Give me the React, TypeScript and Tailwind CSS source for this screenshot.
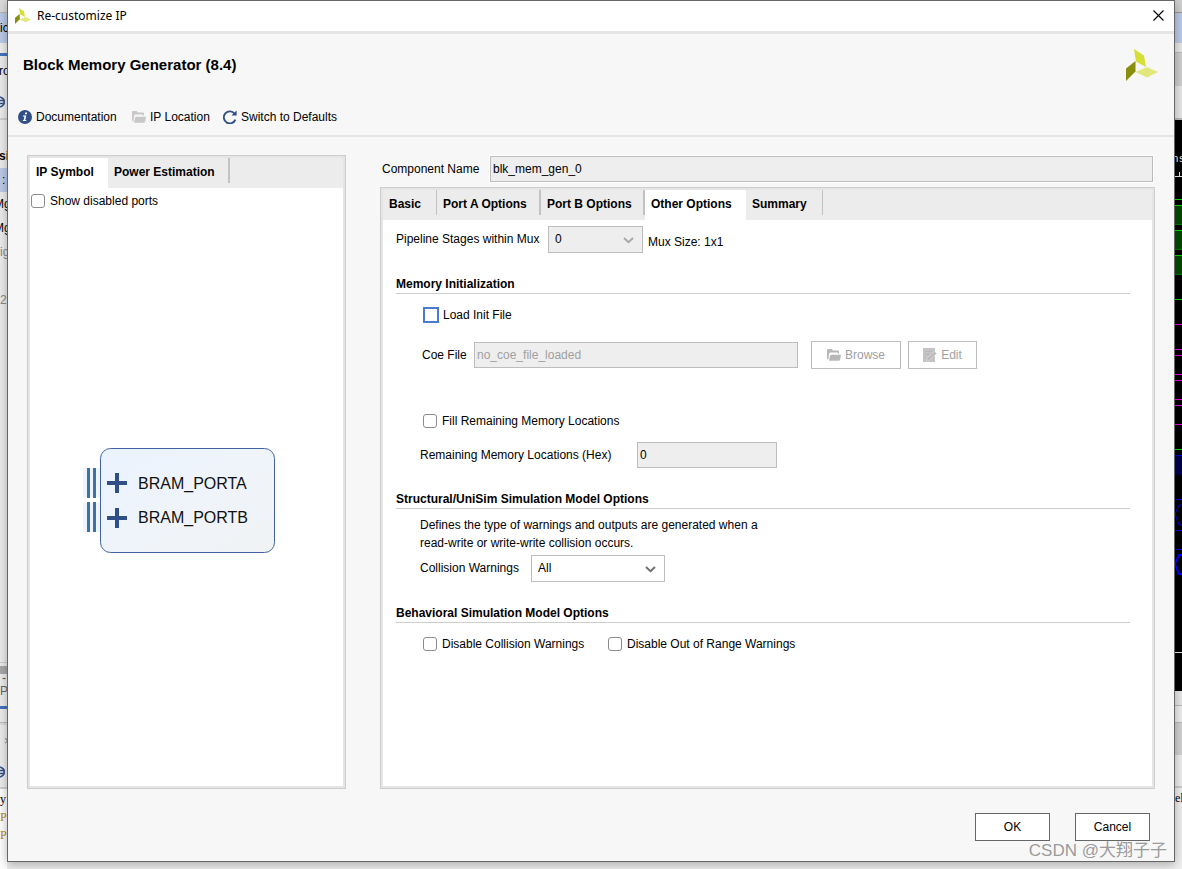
import { useState } from 'react'
import type { ReactNode } from 'react'
import clsx from 'clsx'

const SYMBOL_TABS = [
  { label: 'IP Symbol', width: 'w-[78px]', divider: '' },
  { label: 'Power Estimation', width: 'w-[122px]', divider: 'w-[2px]' },
]

const OPTION_TABS = [
  { label: 'Basic', width: 'w-[54px]', divider: 'w-px' },
  { label: 'Port A Options', width: 'w-[104px]', divider: 'w-[2px]' },
  { label: 'Port B Options', width: 'w-[104px]', divider: 'w-[2px]' },
  { label: 'Other Options', width: 'w-[101px]', divider: '' },
  { label: 'Summary', width: 'w-[77px]', divider: 'w-px' },
]

// Slices of the main window that stay visible on the left of the dialog
const LEFT_ROWS = [
  { text: '', className: 'h-[13px] border-b border-[#b5b5b5] bg-[#dcdcdc]' },
  { text: 'ic', className: 'h-[30px] bg-[#bccbe9]' },
  { text: '', className: 'h-[10px] bg-[#efefef]' },
  { text: '', className: 'h-[3px] bg-[#4573c0]' },
  { text: 'ro', className: 'h-[30px] -ml-px' },
  { text: 'globe', className: 'h-8' },
  { text: '', className: 'h-[2px] bg-[#cfcfcf]' },
  { text: '', className: 'h-6' },
  { text: 'si', className: 'h-6 -ml-px font-bold' },
  { text: ':', className: 'h-6 bg-[#bccbe9] pl-[2px]' },
  { text: 'Mg', className: 'h-6 -ml-1.5' },
  { text: 'Mg', className: 'h-6 -ml-1.5' },
  { text: 'ig', className: 'h-6 text-[#888]' },
  { text: '', className: 'h-6' },
  { text: '2', className: 'h-6 text-[#888]' },
  { text: '', className: 'h-[351px] border-b border-[#cfcfcf]' },
  { text: '', className: 'h-[3px]' },
  { text: '', className: 'h-2 bg-[#a9a9a9]' },
  { text: '-', className: 'h-2 pl-[2px] text-[#555]' },
  { text: 'P', className: 'h-[18px] text-[#666]' },
  { text: '', className: 'h-[6px]' },
  { text: '', className: 'h-[3px] bg-[#4573c0]' },
  { text: '', className: 'h-[13px]' },
  { text: '', className: 'h-[3px] border-t border-[#bbb] bg-[#dedede]' },
  { text: '×', className: 'h-8 pl-1 text-[#888]' },
  { text: 'globe', className: 'h-[30px]' },
  { text: '', className: 'h-[2px] bg-[#d0d0d0]' },
  { text: 'y', className: "h-[19px] bg-white font-['Liberation_Serif',serif]" },
  { text: 'P', className: "h-[18px] bg-white font-['Liberation_Serif',serif] text-[#b8860b]" },
  { text: 'P', className: "h-[18px] bg-white font-['Liberation_Serif',serif] text-[#b8860b]" },
  { text: '', className: 'grow bg-white' },
]

const WAVE_LINES = [
  { y: 79, color: '#00d000' },
  { y: 179, color: '#00d000' },
  { y: 204, color: '#e000e0' },
  { y: 229, color: '#e000e0' },
  { y: 235, color: '#e000e0' },
  { y: 254, color: '#e000e0' },
  { y: 260, color: '#e000e0' },
  { y: 279, color: '#e000e0' },
  { y: 285, color: '#e000e0' },
  { y: 304, color: '#e000e0' },
  { y: 329, color: '#00d000' },
  { y: 379, color: '#0000d8' },
  { y: 410, color: '#0000d8' },
  { y: 429, color: '#0000d8' },
  { y: 532, color: '#d8d8d8' },
]

function XilinxLogo({ className }: { className: string }) {
  return (
    <svg className={className} viewBox="0 0 32 32" aria-hidden="true">
      <path d="M8 0 L18 6.5 L20 18 L10 12.5 Z" fill="#d6df35" />
      <path d="M0 19.5 L9.5 12 V22.5 L0 32 Z" fill="#8b8d0c" />
      <path d="M9.5 23 L21 18 L32 23 L21 28.5 Z" fill="#e3e87c" />
    </svg>
  )
}

function InfoIcon() {
  return (
    <svg className="size-3.5" viewBox="0 0 14 14" aria-hidden="true">
      <circle cx="7" cy="7" r="7" fill="#314f87" />
      <path d="M7.2 2.4h2l-.4 1.8h-2zM5 5.4h3.3L7.3 10h1l-.2 1H4.7l.2-1h.8l.7-3.6H4.8z" fill="#fff" />
    </svg>
  )
}

function FolderIcon({ color }: { color: string }) {
  return (
    <svg className="size-3.5" viewBox="0 0 14 14" fill={color} aria-hidden="true">
      <path d="M0 2 Q0 1 1 1 H4.6 L6 2.4 H11 Q12 2.4 12 3.4 V5.6 H10.8 V4.4 H3.6 Q2.4 4.4 2.2 5.6 L1.4 11.6 Q0 11.4 0 10.4 Z" />
      <path d="M4.4 6.8 H14 L13.2 11.4 Q13 12.8 11.6 12.8 H2 L3 8 Q3.2 6.8 4.4 6.8 Z" />
    </svg>
  )
}

function RefreshIcon() {
  return (
    <svg className="size-3.5" viewBox="0 0 14 14" aria-hidden="true">
      <path d="M11.6 3.8 A6 6 0 1 0 12.4 9.6" fill="none" stroke="#314f87" strokeWidth="1.9" />
      <path d="M13.6 0.4 V5.6 H8.4 Z" fill="#314f87" />
    </svg>
  )
}

function EditIcon() {
  return (
    <svg className="size-3.5" viewBox="0 0 14 14" aria-hidden="true">
      <path d="M0 0h12v14H0z" fill="#c4c4c4" />
      <path d="M2 3.5h7M2 6.5h5M2 9.5h2" stroke="#b8b8b8" />
      <path d="M3.4 13.2 4 10 11.4 3.4 13.6 5.4 6.4 12.4Z" fill="#bdbdbd" stroke="#dcdcdc" strokeWidth=".7" />
    </svg>
  )
}

function Globe() {
  return (
    <svg className="h-3.5 w-[5px]" viewBox="0 0 5 14" aria-hidden="true">
      <path d="M0 2 Q5 4 4 7 Q5 10 0 12 M0 5.5H4 M0 8.5H4" fill="none" stroke="#314f87" strokeWidth="1.6" />
    </svg>
  )
}

function Panel({ className, children }: { className: string; children: ReactNode }) {
  return (
    <section className={clsx('border border-[#cdcdcd]', className)}>
      <div className="flex h-full flex-col border-2 border-[#e5e5e5] bg-white">{children}</div>
    </section>
  )
}

type Tab = { label: string; width: string; divider: string }

function TabBar({ tabs, initial }: { tabs: Tab[]; initial: string }) {
  const [active, setActive] = useState(initial)
  return (
    <div role="tablist" className="flex h-[30px] shrink-0 bg-[#ececec]">
      {tabs.map((tab) => (
        <button
          key={tab.label}
          role="tab"
          aria-selected={active === tab.label}
          onClick={() => setActive(tab.label)}
          className={clsx(
            'flex items-start justify-between pl-1.5 font-bold whitespace-nowrap',
            tab.width,
            active === tab.label && 'bg-white'
          )}
        >
          <span className="leading-[28px]">{tab.label}</span>
          <span className={clsx('h-[25px] bg-[#c2c2c2]', tab.divider)} />
        </button>
      ))}
    </div>
  )
}

function Check({ label, focused = false }: { label: string; focused?: boolean }) {
  return (
    <label className={clsx('flex items-center', focused ? 'gap-1' : 'gap-[5px]')}>
      <input
        type="checkbox"
        className={clsx(
          'appearance-none bg-white checked:bg-[#4573c0]',
          focused ? 'size-4 border-2 border-[#4b7bd0]' : 'size-3.5 rounded-[3px] border border-[#8c8c8c]'
        )}
      />
      {label}
    </label>
  )
}

function Select({ id, value, className, disabled = false }: { id: string; value: string; className: string; disabled?: boolean }) {
  return (
    <div className={clsx('relative h-[27px]', className)}>
      <select
        id={id}
        disabled={disabled}
        defaultValue={value}
        className={clsx(
          'size-full appearance-none border border-[#bdbdbd] px-1.5 pb-[2px] text-black opacity-100',
          disabled ? 'bg-[#eee]' : 'bg-white'
        )}
      >
        <option>{value}</option>
      </select>
      <svg className="pointer-events-none absolute top-[11px] right-[9px] h-[7px] w-[11px]" viewBox="0 0 11 7" aria-hidden="true">
        <path d="M1 1 L5.5 5.2 L10 1" fill="none" stroke={disabled ? '#a8a8a8' : '#707070'} strokeWidth="2" />
      </svg>
    </div>
  )
}

function Heading({ children }: { children: ReactNode }) {
  return <h2 className="mr-[22px] ml-[13px] h-[18px] border-b border-[#cdcdcd] leading-4 font-bold">{children}</h2>
}

function IpSymbol() {
  return (
    <svg className="h-[105px] w-[208px]" viewBox="0 0 208 105" role="img" aria-label="Block memory symbol">
      <defs>
        <linearGradient id="block" x1="0" x2="1" y1="0" y2="1">
          <stop offset="0" stopColor="#eaf3ff" />
          <stop offset=".6" stopColor="#f0f4f9" />
          <stop offset="1" stopColor="#f0f2f4" />
        </linearGradient>
      </defs>
      <path d="M0 20h17v29H0zM0 55h17v29H0z" fill="#edf4fc" />
      <path d="M4 20h3v30H4zM10 20h3v30h-3zM4 54h3v30H4zM10 54h3v30h-3z" fill="#4270a5" />
      <rect x="17.5" y=".5" width="174" height="104" rx="10" fill="url(#block)" stroke="#4163a3" />
      <path d="M32 25h4v8h8v4h-8v8h-4v-8h-8v-4h8zM32 60h4v8h8v4h-8v8h-4v-8h-8v-4h8z" fill="#314f87" />
      <text x="55" y="41" fontSize="16" fill="#111">BRAM_PORTA</text>
      <text x="55" y="75" fontSize="16" fill="#111">BRAM_PORTB</text>
    </svg>
  )
}

function LeftStrip() {
  return (
    <aside className="flex w-[7px] shrink-0 flex-col overflow-hidden">
      {LEFT_ROWS.map((row, i) => (
        <div key={i} className={clsx('flex shrink-0 items-center whitespace-nowrap', row.className)}>
          {row.text === 'globe' ? <Globe /> : row.text}
        </div>
      ))}
    </aside>
  )
}

function RightStrip() {
  return (
    <aside className="flex w-[7px] shrink-0 flex-col">
      <div className="h-[13px] border-b border-[#999] bg-[#d0d0d0]" />
      <div className="h-[30px] bg-[#bccbe9]" />
      <div className="h-[10px] border-b border-[#bbb] bg-[#e8e8e8]" />
      <div className="h-[33px] bg-[#cfcfcf]" />
      <div className="h-[34px] border-b-2 border-[#bbb] bg-[#e8e8e8]" />
      <svg className="relative z-20 h-[571px] w-[7px] shrink-0 bg-black" viewBox="0 0 7 571" aria-hidden="true">
        <text x="-3" y="42" fontSize="11" fontFamily="Liberation Mono, monospace" fill="#d8d8d8">ns</text>
        <path d="M0 56.5H7M4.5 52V56" stroke="#d8d8d8" />
        {[85, 110, 135].map((y) => (
          <g key={y}>
            <rect y={y} width="7" height="20" fill="#004400" />
            <path d={`M0 ${y + 0.5}H7`} stroke="#00d000" />
            <path d={`M0 ${y + 19.5}H7`} stroke="#007000" />
          </g>
        ))}
        <rect y="335" width="7" height="20" fill="#000048" />
        <path d="M0 335.5H7" stroke="#0000d8" />
        {WAVE_LINES.map((line) => (
          <path key={line.y} d={`M0 ${line.y + 0.5}H7`} stroke={line.color} />
        ))}
        <path d="M7 385H4L0 394L4 405H7" fill="none" stroke="#0000d8" />
        <path d="M7 435H4L0 444L4 454H7" fill="none" stroke="#0000ff" strokeWidth="2" />
      </svg>
      <div className="h-[15px] border-b border-[#bbb] bg-[#e8e8e8]" />
      <div className="h-[17px] border-b border-[#bbb] bg-[#eee]" />
      <div className="h-8 bg-[#d2d2d2]" />
      <div className="h-[33px] border-b-2 border-[#ccc] bg-[#eee]" />
      <div className="grow bg-[#f0f0f0] font-['Liberation_Serif',serif] leading-5">el</div>
    </aside>
  )
}

export default function App() {
  return (
    <div className="flex min-h-screen overflow-hidden bg-[#ededed] font-['Liberation_Sans',Arial,sans-serif] text-[12px] leading-4 text-black">
      <LeftStrip />

      <main className="relative z-10 mb-[7px] flex min-w-0 flex-1 flex-col border border-[#666] bg-[#f7f7f7] shadow-[0_2px_10px_rgba(0,0,0,0.3)]">
        {/* Title bar */}
        <div className="flex h-[33px] items-center border-b-3 border-[#e5e5e5] bg-white pr-2.5 pb-px pl-[7px]">
          <XilinxLogo className="size-4" />
          <span className="ml-1.5 flex-1 font-['Noto_Sans','Open_Sans',sans-serif]">Re-customize IP</span>
          <button aria-label="Close" className="p-0">
            <svg className="size-[11px]" viewBox="0 0 11 11" aria-hidden="true">
              <path d="M.5 .5 L10.5 10.5 M10.5 .5 L.5 10.5" stroke="#000" strokeWidth="1.1" />
            </svg>
          </button>
        </div>

        {/* Header */}
        <header className="border-b-2 border-[#e5e5e5] pb-2.5">
          <div className="flex items-start justify-between pt-[15px] pr-4 pl-[15px]">
            <h1 className="text-[15px] leading-8 font-bold">Block Memory Generator (8.4)</h1>
            <XilinxLogo className="size-8" />
          </div>
          <nav className="mt-7 flex pl-[10px]">
            <button className="flex w-[114px] items-center gap-1 whitespace-nowrap">
              <InfoIcon />
              Documentation
            </button>
            <button className="flex w-[91px] items-center gap-1 whitespace-nowrap">
              <FolderIcon color="#c8c8c8" />
              IP Location
            </button>
            <button className="flex items-center gap-1 whitespace-nowrap">
              <RefreshIcon />
              Switch to Defaults
            </button>
          </nav>
        </header>

        <div className="flex flex-1 gap-[34px] pt-[18px] pr-[19px] pl-[19px]">
          <Panel className="w-[319px] shrink-0">
            <TabBar tabs={SYMBOL_TABS} initial="IP Symbol" />
            <div className="flex h-[26px] items-center pl-px">
              <Check label="Show disabled ports" />
            </div>
            <div className="flex flex-1 items-center justify-center">
              <IpSymbol />
            </div>
          </Panel>

          <div className="flex min-w-0 flex-1 flex-col">
            <div className="flex h-8 items-start pr-[2px] pl-[2px]">
              <label htmlFor="component" className="w-[108px] leading-7">
                Component Name
              </label>
              <input
                id="component"
                readOnly
                value="blk_mem_gen_0"
                className="mt-px h-[26px] min-w-0 flex-1 border border-[#bdbdbd] bg-[#eee] px-[2px] outline-1 outline-white"
              />
            </div>

            <Panel className="flex-1">
              <TabBar tabs={OPTION_TABS} initial="Other Options" />

              <div className="flex pt-1.5 pb-[18px] pl-[13px]">
                <label htmlFor="pipeline" className="w-[152px] leading-[26px]">
                  Pipeline Stages within Mux
                </label>
                <Select id="pipeline" value="0" disabled className="w-[95px]" />
                <span className="ml-[5px] leading-8">Mux Size: 1x1</span>
              </div>

              <Heading>Memory Initialization</Heading>
              <div className="flex flex-col pt-[13px] pb-[23px] pl-10">
                <Check label="Load Init File" focused />
                <div className="mt-[18px] -ml-px flex items-center">
                  <label htmlFor="coe" className="w-[52px]">
                    Coe File
                  </label>
                  <input
                    id="coe"
                    disabled
                    value="no_coe_file_loaded"
                    className="h-[26px] w-[324px] border border-[#bdbdbd] bg-[#eee] px-[2px] text-[#a0a0a0]"
                  />
                  <button
                    disabled
                    className="ml-[13px] flex h-7 w-[90px] items-center justify-center gap-1 border border-[#bdbdbd] bg-white text-[#a0a0a0]"
                  >
                    <FolderIcon color="#b8b8b8" />
                    Browse
                  </button>
                  <button
                    disabled
                    className="ml-[7px] flex h-7 w-[69px] items-center justify-center gap-1 border border-[#bdbdbd] bg-white text-[#a0a0a0]"
                  >
                    <EditIcon />
                    Edit
                  </button>
                </div>
                <div className="mt-11">
                  <Check label="Fill Remaining Memory Locations" />
                </div>
                <div className="mt-[13px] -ml-[3px] flex items-center">
                  <label htmlFor="fill" className="w-[217px]">
                    Remaining Memory Locations (Hex)
                  </label>
                  <input id="fill" readOnly value="0" className="h-[26px] w-[140px] border border-[#bdbdbd] bg-[#eee] px-[2px]" />
                </div>
              </div>

              <Heading>Structural/UniSim Simulation Model Options</Heading>
              <div className="pt-[7px] pb-[23px] pl-[37px]">
                <p className="leading-[18px]">
                  Defines the type of warnings and outputs are generated when a
                  <br />
                  read-write or write-write collision occurs.
                </p>
                <div className="mt-[3px] flex">
                  <label htmlFor="collision" className="w-[111px] leading-[26px]">
                    Collision Warnings
                  </label>
                  <Select id="collision" value="All" className="w-[134px]" />
                </div>
              </div>

              <Heading>Behavioral Simulation Model Options</Heading>
              <div className="flex pt-[13px] pl-10">
                <div className="w-[185px]">
                  <Check label="Disable Collision Warnings" />
                </div>
                <Check label="Disable Out of Range Warnings" />
              </div>
            </Panel>
          </div>
        </div>

        <footer className="flex justify-end gap-[25px] pt-6 pr-6 pb-5">
          <button className="h-7 w-[75px] border border-[#666] bg-white">OK</button>
          <button className="h-7 w-[75px] border border-[#666] bg-white">Cancel</button>
        </footer>

        <span className="pointer-events-none absolute right-[7px] bottom-0 font-['Liberation_Sans','Noto_Sans_CJK_SC',sans-serif] text-[17px] leading-5 whitespace-nowrap text-[#8e8e8e]/90">
          CSDN @大翔子子
        </span>
      </main>

      <RightStrip />
    </div>
  )
}
